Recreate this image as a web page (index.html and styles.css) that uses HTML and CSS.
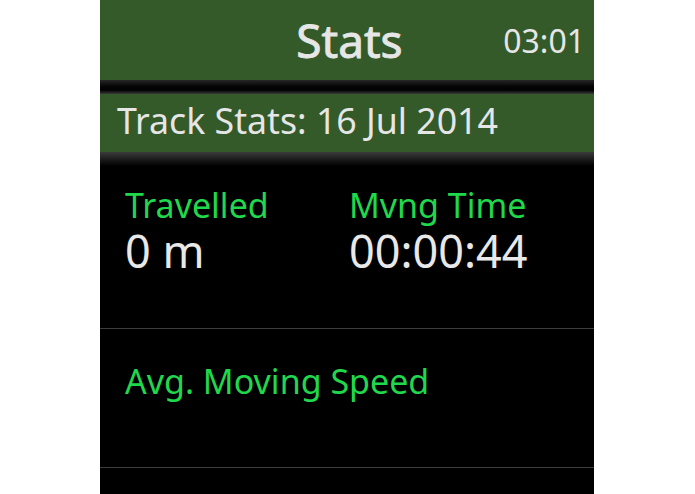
FILE: index.html
```html
<!DOCTYPE html>
<html lang="en">
<head>
<meta charset="utf-8">
<title>Stats</title>
<link rel="stylesheet" href="styles.css">
</head>
<body>
<div class="screen">
  <header class="titlebar">
    <span class="spacer"></span>
    <span class="title">Stats</span>
    <span class="clock">03:01</span>
  </header>
  <div class="sep"></div>
  <div class="subbar">Track Stats: 16 Jul 2014</div>
  <section class="row row-first">
    <div class="cell cell-left">
      <div class="label">Travelled</div>
      <div class="value">0 m</div>
    </div>
    <div class="cell">
      <div class="label">Mvng Time</div>
      <div class="value">00:00:44</div>
    </div>
  </section>
  <section class="row row-second">
    <div class="cell">
      <div class="label">Avg. Moving Speed</div>
    </div>
  </section>
</div>
</body>
</html>
```

FILE: styles.css
```css
html, body {
  margin: 0;
  padding: 0;
  background: #ffffff;
}

body {
  font-family: "Noto Sans", "Open Sans", "DejaVu Sans", sans-serif;
}

.screen {
  margin-left: 100px;
  width: 494px;
  height: 494px;
  background: #000000;
  overflow: hidden;
}

.titlebar {
  height: 80px;
  background: #345a2a;
  display: grid;
  grid-template-columns: 1fr auto 1fr;
  align-items: center;
  color: #e6e6e6;
}

.title {
  font-size: 46px;
  line-height: 1;
  padding-left: 5px;
  -webkit-text-stroke: 0.9px #e6e6e6;
}

.clock {
  justify-self: end;
  font-size: 32px;
  line-height: 1;
  padding-right: 9px;
  padding-top: 1px;
}

.sep {
  height: 14px;
  background: linear-gradient(#262626, #060606 45%, #000 72%, #3a3a3a);
}

.subbar {
  box-sizing: border-box;
  height: 58px;
  background: #345a2a;
  color: #e6e6e6;
  font-size: 35.7px;
  line-height: 1;
  padding: 9px 0 0 17px;
}

.row {
  display: flex;
  box-sizing: border-box;
  border-bottom: 1px solid #3c3c3c;
  padding-left: 25px;
}

.row-first {
  height: 177px;
  padding-top: 36px;
  background: linear-gradient(#3a3a3a, #000000 14px) no-repeat;
}

.row-second {
  height: 139px;
  padding-top: 35px;
}

.cell-left {
  width: 224px;
}

.label {
  color: #20d84b;
  font-size: 34px;
  line-height: 1;
}

.value {
  color: #e8e8e8;
  font-size: 45px;
  line-height: 1;
  margin-top: 6px;
}
```
